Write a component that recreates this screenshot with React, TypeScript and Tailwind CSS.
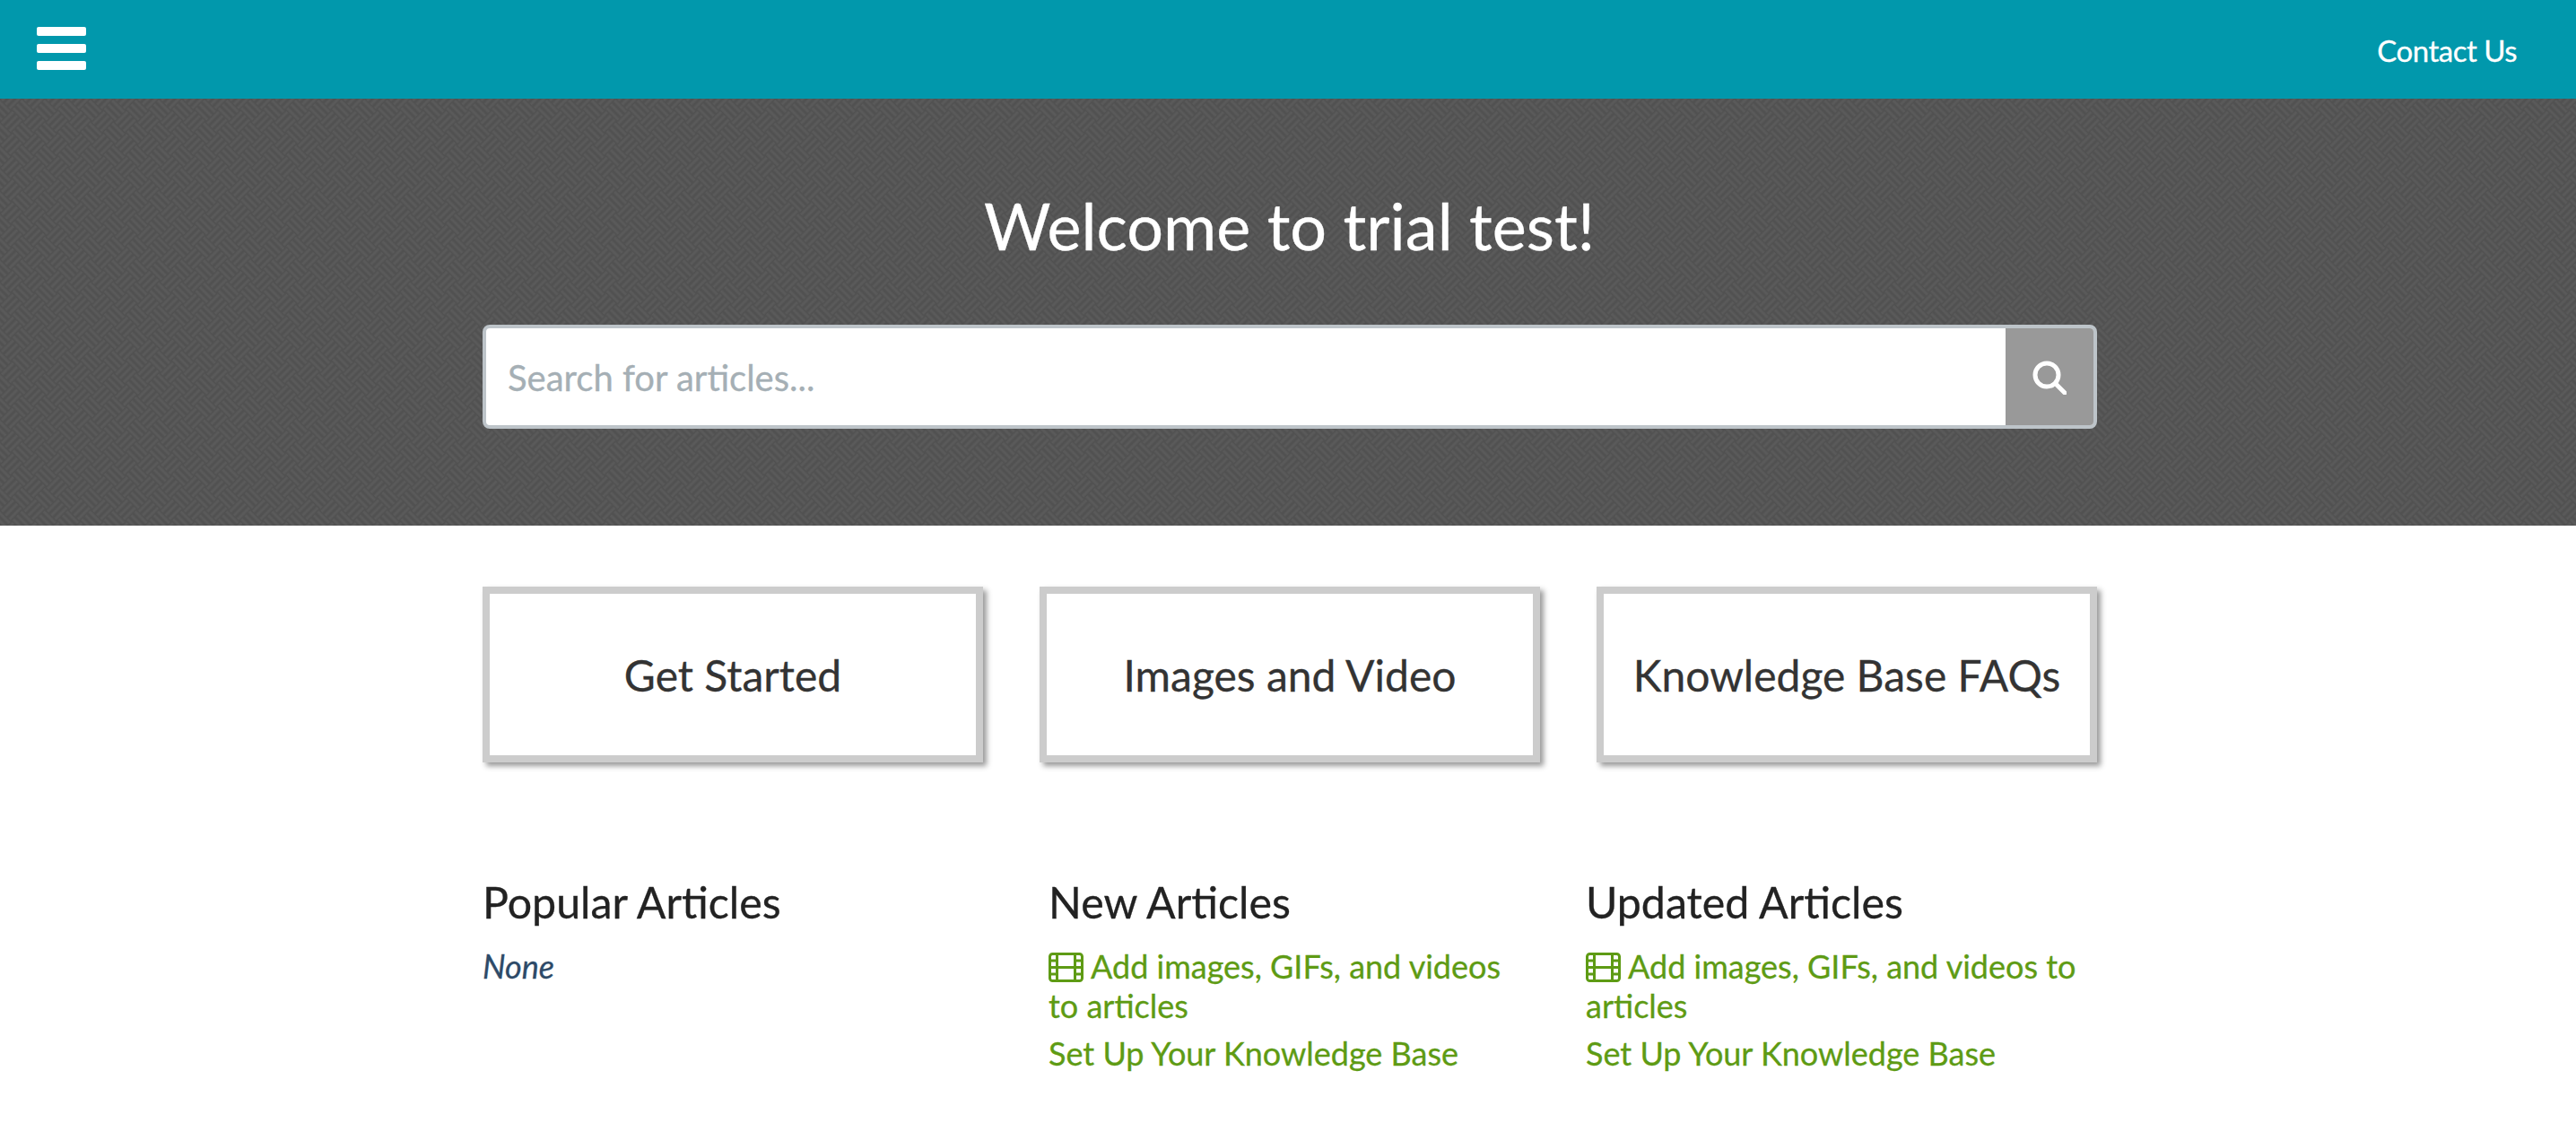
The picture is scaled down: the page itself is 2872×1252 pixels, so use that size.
const FilmIcon = () => (
  <svg viewBox="0 0 39 33" className="inline-block w-[39px] h-[33px] mr-[8px] align-[-4px]" fill="none" stroke="currentColor" strokeWidth="3">
    <rect x="1.5" y="1.5" width="36" height="30" rx="3" />
    <path d="M9.5 1.5v30M29.5 1.5v30M9.5 16.5h20M1.5 9h8M1.5 16.5h8M1.5 24h8M29.5 9h8M29.5 16.5h8M29.5 24h8" />
  </svg>
);

const SearchIcon = () => (
  <svg viewBox="0 0 38 38" className="w-[38px] h-[38px] mt-[2px]" fill="none" stroke="white" strokeWidth="5" strokeLinecap="round">
    <circle cx="16" cy="16" r="13" />
    <path d="M26 26l10 10" />
  </svg>
);

// woven texture behind the hero
const HeroTexture = () => (
  <svg className="absolute inset-0 w-full h-full" aria-hidden="true">
    <defs>
      <pattern id="weave" width="36" height="36" patternUnits="userSpaceOnUse" patternTransform="rotate(45)">
        <path d="M0 3h18M0 9h18M0 15h18M18 21h18M18 27h18M18 33h18M21 0v18M27 0v18M33 0v18M3 18v18M9 18v18M15 18v18" stroke="#5a5a5a" strokeWidth="3" />
      </pattern>
    </defs>
    <rect width="100%" height="100%" fill="url(#weave)" />
  </svg>
);

const cards = ["Get Started", "Images and Video", "Knowledge Base FAQs"];

const ArticleLinks = () => (
  <>
    <a className="block text-[#5e9b14] leading-[44px]">
      <FilmIcon />
      Add images, GIFs, and videos to articles
    </a>
    <a className="block text-[#5e9b14] leading-[44px] mt-[9px]">Set Up Your Knowledge Base</a>
  </>
);

export default function App() {
  return (
    <div className="min-h-[1252px] bg-white font-['Lato',sans-serif] [-webkit-text-stroke:0.3px]">
      {/* nav */}
      <nav className="h-[110px] bg-[#0198ac] flex justify-between pl-[41px] pr-[66px]">
        <div className="flex flex-col gap-[9px] w-[55px] mt-[30px]">
          <span className="block h-[10px] bg-white rounded-[2px]" />
          <span className="block h-[10px] bg-white rounded-[2px]" />
          <span className="block h-[10px] bg-white rounded-[2px]" />
        </div>
        <a className="self-center pt-[3px] text-white text-[33px] tracking-[-0.5px]">Contact Us</a>
      </nav>

      {/* hero */}
      <header className="relative h-[476px] bg-[#515151] flex flex-col items-center pt-[98px]">
        <HeroTexture />
        <h1 className="relative ml-[3px] text-white text-[72px] leading-[86px]">Welcome to trial test!</h1>
        <div className="relative mt-[68px] ml-[4px] w-[1800px] h-[116px] flex border-4 border-[#bdc4c9] rounded-[8px] overflow-hidden bg-white">
          <div className="flex-1 pl-[24px] pt-[2px] flex items-center text-[40px] text-[#a5afb5]">Search for articles...</div>
          <div className="w-[98px] bg-[#999999] flex items-center justify-center">
            <SearchIcon />
          </div>
        </div>
      </header>

      <main className="w-[1804px] ml-[538px]">
        {/* cards */}
        <div className="mt-[68px] grid grid-cols-[558px_558px_558px] gap-x-[63px]">
          {cards.map((c) => (
            <div key={c} className="h-[196px] pt-[2px] border-8 border-[#cccccc] shadow-[4px_4px_6px_#999999] flex items-center justify-center text-[48px] text-[#333333]">
              {c}
            </div>
          ))}
        </div>

        {/* article lists */}
        <div className="mt-[126px] grid grid-cols-[583px_551px_570px] gap-x-[48px] text-[36px]">
          <section>
            <h2 className="text-[48.3px] leading-[58px] text-[#222222] mb-[21px]">Popular Articles</h2>
            <em className="text-[#2d4a68] leading-[44px] block">None</em>
          </section>
          <section className="pr-[31px]">
            <h2 className="text-[48.3px] leading-[58px] text-[#222222] mb-[21px]">New Articles</h2>
            <ArticleLinks />
          </section>
          <section>
            <h2 className="text-[48.3px] leading-[58px] text-[#222222] mb-[21px]">Updated Articles</h2>
            <ArticleLinks />
          </section>
        </div>
      </main>
    </div>
  );
}
